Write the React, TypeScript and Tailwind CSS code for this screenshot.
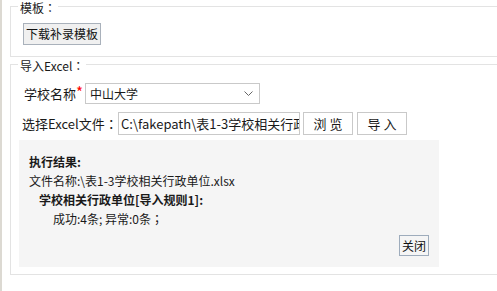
import React from "react";

function P({ c }: { c: string }) {
  return <span className="font-['Noto_Sans_CJK_TC',sans-serif]">{c}</span>;
}

export default function App() {
  return (
    <div className="w-[497px] h-[291px] overflow-hidden bg-white border-l-2 border-[#dcd9d2] pl-[8px] font-['Noto_Sans_CJK_SC',sans-serif] text-[12px] text-[#1a1a1a]">
      <fieldset className="-mt-[2px] w-[500px] border border-[#e3e3e3] px-[7px] pt-[9px] pb-[11px]">
        <legend className="px-[2px] pt-[4px] leading-[12px] text-[12px]">
          模板<P c="：" />
        </legend>
        <div className="pl-[5px]">
          <button className="h-[22px] w-[78px] border border-[#a9b1bb] bg-[#f0f0f0] text-[12px] leading-[20px] text-[#111]">
            下载补录模板
          </button>
        </div>
      </fieldset>

      <fieldset className="-mt-[1px] w-[500px] border border-[#e3e3e3] px-[7px] pt-[11px] pb-[7px]">
        <legend className="px-[2px] pt-[4px] leading-[12px] text-[12px]">
          导入Excel<P c="：" />
        </legend>

        <div className="flex h-[21px] items-center">
          <div className="w-[67px] pl-[6px] text-[13px] leading-[21px] whitespace-nowrap">
            学校名称<span className="text-[15px] text-[#ff0000] align-top leading-[17px]">*</span>
          </div>
          <div className="flex h-[21px] w-[175px] items-center justify-between border border-[#c9c9c9] bg-white pl-[4px] pr-[6px]">
            <span className="text-[12px] leading-[19px]">中山大学</span>
            <svg width="9" height="5" viewBox="0 0 9 5">
              <path d="M0.5 0.5 L4.5 4.5 L8.5 0.5" fill="none" stroke="#666" strokeWidth="1" />
            </svg>
          </div>
        </div>

        <div className="mt-[8px] flex h-[23px] items-center">
          <div className="w-[100px] pl-[4px] text-[13px] leading-[23px] whitespace-nowrap">
            选择Excel文件<P c="：" />
          </div>
          <input
            readOnly
            value="C:\fakepath\表1-3学校相关行政单位.xlsx"
            className="h-[23px] w-[182px] border border-[#c9c9c9] bg-white pl-[2px] font-['Noto_Sans_CJK_SC',sans-serif] text-[13px] text-[#1a1a1a] outline-none"
          />
          <button className="ml-[3px] h-[23px] w-[50px] border border-[#c9c9c9] bg-white text-[13px] leading-[21px]">
            浏 览
          </button>
          <button className="ml-[4px] h-[23px] w-[50px] border border-[#c9c9c9] bg-white text-[13px] leading-[21px]">
            导 入
          </button>
        </div>

        <div className="mt-[5px] ml-[1px] flex h-[127px] w-[420px] flex-col bg-[#f5f5f5] pl-[10px] pr-[10px] pt-[12px] pb-[11px] text-[12px] leading-[19px]">
          <div className="font-bold">执行结果:</div>
          <div>文件名称:\表1-3学校相关行政单位.xlsx</div>
          <div className="pl-[10px] font-bold">学校相关行政单位[导入规则1]:</div>
          <div className="pl-[24px]">
            成功:4条; 异常:0条<P c="；" />
          </div>
          <div className="mt-[7px] flex justify-end">
            <button className="h-[21px] w-[30px] border border-[#9eacbc] bg-[#f5f5f5] text-[12px] leading-[19px] text-[#111]">
              关闭
            </button>
          </div>
        </div>
      </fieldset>
    </div>
  );
}
